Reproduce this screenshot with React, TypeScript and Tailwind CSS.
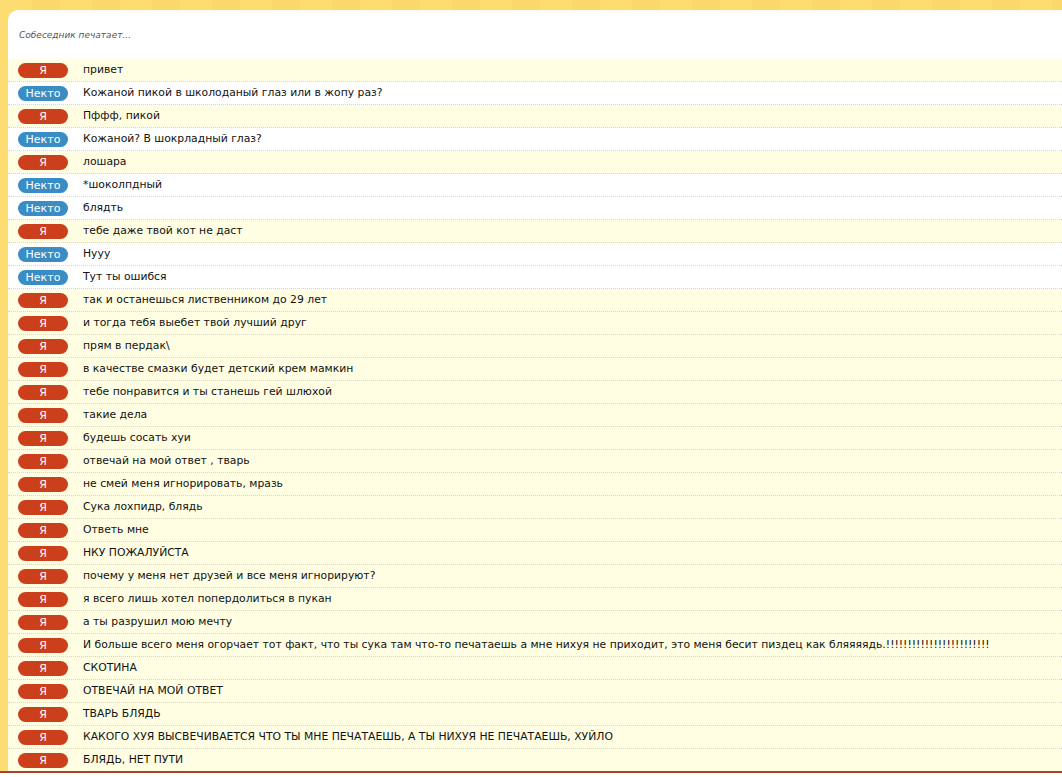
type Msg = { me: boolean; text: string }

const messages: Msg[] = [
  { me: true, text: 'привет' },
  { me: false, text: 'Кожаной пикой в школоданый глаз или в жопу раз?' },
  { me: true, text: 'Пффф, пикой' },
  { me: false, text: 'Кожаной? В шокрладный глаз?' },
  { me: true, text: 'лошара' },
  { me: false, text: '*шоколпдный' },
  { me: false, text: 'блядть' },
  { me: true, text: 'тебе даже твой кот не даст' },
  { me: false, text: 'Нууу' },
  { me: false, text: 'Тут ты ошибся' },
  { me: true, text: 'так и останешься лиственником до 29 лет' },
  { me: true, text: 'и тогда тебя выебет твой лучший друг' },
  { me: true, text: 'прям в пердак\\' },
  { me: true, text: 'в качестве смазки будет детский крем мамкин' },
  { me: true, text: 'тебе понравится и ты станешь гей шлюхой' },
  { me: true, text: 'такие дела' },
  { me: true, text: 'будешь сосать хуи' },
  { me: true, text: 'отвечай на мой ответ , тварь' },
  { me: true, text: 'не смей меня игнорировать, мразь' },
  { me: true, text: 'Сука лохпидр, блядь' },
  { me: true, text: 'Ответь мне' },
  { me: true, text: 'НКУ ПОЖАЛУЙСТА' },
  { me: true, text: 'почему у меня нет друзей и все меня игнорируют?' },
  { me: true, text: 'я всего лишь хотел попердолиться в пукан' },
  { me: true, text: 'а ты разрушил мою мечту' },
  {
    me: true,
    text: 'И больше всего меня огорчает тот факт, что ты сука там что-то печатаешь а мне нихуя не приходит, это меня бесит пиздец как бляяяядь.!!!!!!!!!!!!!!!!!!!!!!!!',
  },
  { me: true, text: 'СКОТИНА' },
  { me: true, text: 'ОТВЕЧАЙ НА МОЙ ОТВЕТ' },
  { me: true, text: 'ТВАРЬ БЛЯДЬ' },
  { me: true, text: 'КАКОГО ХУЯ ВЫСВЕЧИВАЕТСЯ ЧТО ТЫ МНЕ ПЕЧАТАЕШЬ, А ТЫ НИХУЯ НЕ ПЕЧАТАЕШЬ, ХУЙЛО' },
  { me: true, text: 'БЛЯДЬ, НЕТ ПУТИ' },
]

function Row({ msg }: { msg: Msg }) {
  return (
    <div
      className={`flex items-center h-[23px] border-b border-dotted border-[#d6d6d0] ${
        msg.me ? 'bg-[#fffee2]' : 'bg-white'
      }`}
    >
      <span
        className={`ml-[10px] w-[50px] h-[15px] rounded-full shrink-0 flex items-center justify-center text-white text-[11px] leading-none ${
          msg.me ? 'bg-[#cb3f1d]' : 'bg-[#3a8cc4]'
        }`}
      >
        {msg.me ? 'Я' : 'Некто'}
      </span>
      <span className="ml-[15px] whitespace-nowrap text-[#111] text-[10.8px]">{msg.text}</span>
    </div>
  )
}

export default function App() {
  return (
    <div
      className="w-[1062px] h-[777px] overflow-hidden bg-white"
      style={{ fontFamily: '"DejaVu Sans", Verdana, sans-serif' }}
    >
      <div className="h-[773px] pt-[10px] pl-[8px] border-b-2 border-[#a9402b] bg-[repeating-linear-gradient(90deg,#fddd72_0px,#fddd72_32px,#fbd86c_32px,#fbd86c_60px)]">
        <div className="h-full bg-white rounded-tl-[10px] overflow-hidden">
          {/* typing status */}
          <div className="h-[49px] flex items-center pl-[11px] pt-[2px]">
            <span className="italic text-[9px] text-[#555]">Собеседник печатает...</span>
          </div>
          {messages.map((m, i) => (
            <Row key={i} msg={m} />
          ))}
        </div>
      </div>
    </div>
  )
}
